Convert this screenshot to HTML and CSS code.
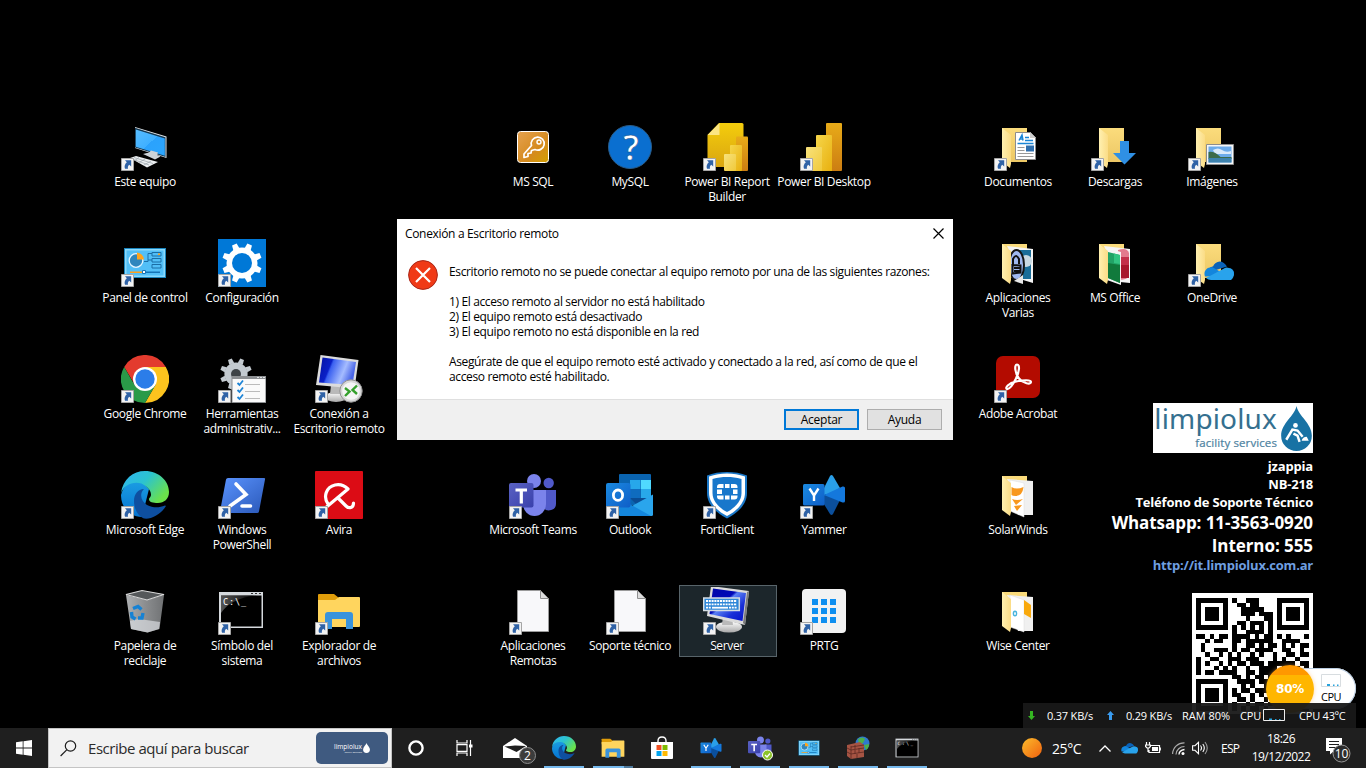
FILE: index.html
```html
<!DOCTYPE html>
<html lang="es">
<head>
<meta charset="utf-8">
<title>Escritorio</title>
<link rel="stylesheet" href="styles.css">
</head>
<body>
<svg class="defs" aria-hidden="true">
<defs>
<linearGradient id="gScr" x1="0" y1="0" x2="1" y2="1"><stop offset="0" stop-color="#58bdff"/><stop offset=".5" stop-color="#3fb0ff"/><stop offset=".5" stop-color="#2ba2fc"/><stop offset="1" stop-color="#2ba6ff"/></linearGradient>
<linearGradient id="gBlue" x1="0" y1="0" x2="1" y2=".3"><stop offset="0" stop-color="#0412a0"/><stop offset=".35" stop-color="#0a20c8"/><stop offset=".4" stop-color="#3a60f0"/><stop offset=".75" stop-color="#a5bcff"/><stop offset="1" stop-color="#4a66e8"/></linearGradient>
<linearGradient id="gBlue2" x1="0" y1="0" x2="1" y2="1"><stop offset="0" stop-color="#0008a8"/><stop offset=".4" stop-color="#0008b8"/><stop offset=".45" stop-color="#5a80f4"/><stop offset=".7" stop-color="#1a30d8"/><stop offset="1" stop-color="#0310c8"/></linearGradient>
<linearGradient id="gEdgeTop" x1="0" y1="0" x2="1" y2=".6"><stop offset="0" stop-color="#2fb4f5"/><stop offset=".5" stop-color="#2cc3cf"/><stop offset="1" stop-color="#6be24a"/></linearGradient>
<linearGradient id="gEdgeL" x1="0" y1="0" x2="0" y2="1"><stop offset="0" stop-color="#1b9de2"/><stop offset="1" stop-color="#0573d0"/></linearGradient>
<linearGradient id="gPs" x1="0" y1="0" x2="1" y2="1"><stop offset="0" stop-color="#5b94ff"/><stop offset="1" stop-color="#2a58b8"/></linearGradient>
<linearGradient id="gFold" x1="0" y1="0" x2="0" y2="1"><stop offset="0" stop-color="#fbdc7c"/><stop offset="1" stop-color="#ecc765"/></linearGradient>
<linearGradient id="gFlap" x1="0" y1="0" x2="1" y2="0"><stop offset="0" stop-color="#fff0b0"/><stop offset="1" stop-color="#fbdc86"/></linearGradient>
<linearGradient id="gKey" x1="0" y1="0" x2="1" y2="1"><stop offset="0" stop-color="#e5a250"/><stop offset=".6" stop-color="#d58a1e"/><stop offset="1" stop-color="#d3a000"/></linearGradient>
<linearGradient id="gY1" x1="0" y1="0" x2="1" y2="1"><stop offset="0" stop-color="#f8e27c"/><stop offset="1" stop-color="#f0c93a"/></linearGradient>
<linearGradient id="gY2" x1="0" y1="0" x2="1" y2="1"><stop offset="0" stop-color="#f6d64a"/><stop offset="1" stop-color="#e8b010"/></linearGradient>
<linearGradient id="gY3" x1="0" y1="0" x2="0" y2="1"><stop offset="0" stop-color="#e8ab18"/><stop offset="1" stop-color="#cc7d12"/></linearGradient>
<linearGradient id="gPage" x1="0" y1="0" x2="0" y2="1"><stop offset="0" stop-color="#f4cd0c"/><stop offset="1" stop-color="#d9a511"/></linearGradient>
<linearGradient id="gT" x1="0" y1="0" x2="1" y2="1"><stop offset="0" stop-color="#5a62c3"/><stop offset="1" stop-color="#3940ab"/></linearGradient>
<linearGradient id="gO" x1="0" y1="0" x2="1" y2="1"><stop offset="0" stop-color="#1a8ae0"/><stop offset="1" stop-color="#0f5ec8"/></linearGradient>
<linearGradient id="gBin" x1="0" y1="0" x2="1" y2="0"><stop offset="0" stop-color="#aeb0b2"/><stop offset=".5" stop-color="#8c8e90"/><stop offset="1" stop-color="#707274"/></linearGradient>
<linearGradient id="gSun" x1="0" y1="0" x2="1" y2="1"><stop offset="0" stop-color="#fbbc2c"/><stop offset="1" stop-color="#f0600e"/></linearGradient>
<linearGradient id="gSilver" x1="0" y1="0" x2="0" y2="1"><stop offset="0" stop-color="#fff"/><stop offset="1" stop-color="#a8a8a8"/></linearGradient>
<linearGradient id="gCmd" x1="0" y1="0" x2="1" y2="0"><stop offset="0" stop-color="#777"/><stop offset="1" stop-color="#000"/></linearGradient>
</defs>

<symbol id="lnk" viewBox="0 0 13 13"><path fill="#f3f3f3" stroke="#a5a5a5" d="M.5.5h12v12H.5z"/><path fill="#2f62a6" d="M4 2.200h6.200v6.200L8.300 6.700C7 7.800 6.600 9 7 10.800H4C3 8.200 4 6 5.800 4.300z"/></symbol>

<symbol id="pc" viewBox="0 0 48 48"><path fill="#e3e7ea" d="M14 4l31.500 9.500V35L14 25z"/><path fill="#15374f" d="M14 4.800l30.500 9.500v19.800L14 24.600z"/><path fill="url(#gScr)" d="M14.800 6.400l29 9v17.300l-29-8.900z"/><path fill="#cdd3d8" d="M22 31l6-1.500 2-2 7 2-1 2.500 3.500 1.500-5.500 3z"/><path fill="#eceff1" d="M9 35l6-2 22 6-11 5.500z"/><path fill="none" stroke="#9aa3aa" stroke-width=".7" d="M13 34.500l19 6M11 36l17 6M18 34.500l-4 3M24 36l-6 3.500M30 38l-7 4"/></symbol>

<symbol id="panel" viewBox="0 0 48 48"><path fill="#1b86bf" d="M3 9h42v30H3z"/><path fill="#8ad8fb" d="M4 10h40v28H4z"/><path fill="#52bff7" d="M5.500 11.500h37v25h-37z"/><circle cx="15" cy="21.500" r="6.800" fill="#2f86bd" stroke="#e4f5ff" stroke-width="1.300"/><path fill="#ffa41c" d="M16 13.500a7.500 7.500 0 0 1 7 7h-7z"/><path fill="none" stroke="#1b6ea6" d="M23 22.500h4v-8h4M27 21h4M31 13.500h9v3.500h-9zM31 19.500h9V23h-9zM31 25.500h9V29h-9z"/><path fill="#ff9f1a" d="M9 32.500h13V34H9zM37 14.500h2v1.500h-2z"/><path fill="#1573b5" d="M24 32.500h15V34H24z"/><path fill="#fff" stroke="#1573b5" d="M21.500 31.500h3v3h-3z"/></symbol>

<symbol id="gear" viewBox="0 0 48 48"><path fill="#0078d7" d="M0 0h48v48H0z"/><g fill="#fff" transform="translate(24 24)"><circle r="15.500"/><g id="teeth"><path d="M-3.300-14l.8-6h5l.8 6z" transform="rotate(22.500)"/><path d="M-3.300-14l.8-6h5l.8 6z" transform="rotate(67.500)"/><path d="M-3.300-14l.8-6h5l.8 6z" transform="rotate(112.500)"/><path d="M-3.300-14l.8-6h5l.8 6z" transform="rotate(157.500)"/><path d="M-3.300-14l.8-6h5l.8 6z" transform="rotate(202.500)"/><path d="M-3.300-14l.8-6h5l.8 6z" transform="rotate(247.500)"/><path d="M-3.300-14l.8-6h5l.8 6z" transform="rotate(292.500)"/><path d="M-3.300-14l.8-6h5l.8 6z" transform="rotate(337.500)"/></g><circle r="10" fill="#0078d7"/></g></symbol>

<symbol id="chrome" viewBox="0 0 48 48"><path fill="#e33b2e" d="M3.200 12a24 24 0 0 1 41.600 0z"/><path fill="#e33b2e" d="M3.200 12L14 30l10-18z"/><path fill="#fcc31e" d="M44.800 12A24 24 0 0 1 24 48l10.400-18L35 20 24 12z"/><path fill="#2a9a48" d="M3.200 12A24 24 0 0 0 24 48l10.400-18L24 36l-10.400-6z"/><circle cx="24" cy="24" r="12" fill="#fff"/><circle cx="24" cy="24" r="9.700" fill="#2b7de9"/></symbol>

<symbol id="tools" viewBox="0 0 48 48"><g fill="#c3cad0" transform="translate(18 19) scale(.8)"><circle r="14.500"/><use href="#teeth"/></g><circle cx="18" cy="19" r="5" fill="#3e4347"/><path fill="#8d9093" d="M13.500 21H48v27H13.500z"/><path fill="#fafafa" d="M14.500 24h32.800v23H14.500z"/><path fill="#dfe2e4" d="M39 22h2v1h-2zM42 22h2v1h-2zM45 22h2v1h-2z"/><path fill="none" stroke="#1d84d6" stroke-width="1.800" d="M19.500 28l2 2 3.500-4.500M19.500 35l2 2 3.500-4.500M19.500 42l2 2 3.500-4.500"/><path stroke="#bbb" d="M27 29.500h15M27 36.500h15M27 43.500h15"/></symbol>

<symbol id="monitor" viewBox="0 0 48 48"><ellipse cx="26" cy="41" rx="13" ry="5.500" fill="url(#gSilver)"/><path fill="#b9b9b9" d="M20 30h9l1 9H19z"/><path fill="#dcdcdc" d="M8 0l38 5-4 34L4 30z"/><path fill="#7b7b7b" d="M46 5l-4 34-2-2 4-31z"/><path fill="url(#gBlue2)" d="M10 2.500l33 4.500-3.500 28L6.500 28z"/></symbol>

<symbol id="rdp" viewBox="0 0 48 48"><ellipse cx="21" cy="42" rx="11" ry="5" fill="url(#gSilver)"/><path fill="#b9b9b9" d="M16 30h9l1 9H15z"/><path fill="#dcdcdc" d="M5.500 0L43.500 5 39.500 33.500 1 30z"/><path fill="url(#gBlue)" d="M7.500 2.500L41 7l-3.500 23L4 27.500z"/><circle cx="36" cy="36" r="11.200" fill="#d8d8d8" stroke="#909090"/><circle cx="36" cy="36" r="8.800" fill="#f5f5f5"/><path fill="none" stroke="#35a02c" stroke-width="2.400" d="M30 33l4.500 3.500L30 41M42 30.500L37.500 35l4.500 4"/></symbol>

<symbol id="edge" viewBox="0 0 48 48"><path fill="url(#gEdgeL)" d="M0 24C3 12 12 8 21 11l7 7-7 28C8 46 0 36 0 24z"/><path fill="url(#gEdgeTop)" d="M0 22C2 8 12 0 24 0c14 0 24 10 24 21 0 7-5 11-11 11-5 0-9-1-9-3.500 0-2 2-2 2-5 0-5-5-8.500-9.500-11C12 10 3 14 0 22z"/><path fill="#0e4fa0" d="M13 30c0-7 4-12 10-12-5 5-3 12 3 16 6 3 12 3 18 .5 1 0 1 .6.500 1.200C39 44 30 48.500 23 47.500 17 45 13 38 13 30z"/></symbol>

<symbol id="ps" viewBox="0 0 48 48"><path fill="url(#gPs)" d="M10 7h36q1.500 0 1 1.500l-6 32q-.3 1.500-2 1.500H3q-1.500 0-1-1.500L8 8.500Q8.400 7 10 7z"/><path fill="none" stroke="#fff" stroke-width="3.600" stroke-linecap="round" d="M18 13l10 10.500L12 35M24 35h8.500"/></symbol>

<symbol id="avira" viewBox="0 0 48 48"><rect width="48" height="48" rx="1" fill="#dc0c15"/><path fill="none" stroke="#fff" stroke-width="3.200" stroke-linecap="round" stroke-linejoin="round" d="M13 33C8 26 11 16 20 14c5-1 10 1 13 4L11.500 36M23 27l8 8c3 3 7.500 2 7.500-3"/></symbol>

<symbol id="bin" viewBox="0 0 48 48"><path fill="url(#gBin)" d="M5 8l21 5 17-5-4.500 34-12 3.500L10 42z"/><path fill="#d9dcdf" d="M9 34l9-2 21 3-1 7-11.500 3.500L10 42z" opacity=".7"/><path fill="#55585a" stroke="#dadada" stroke-width="1.200" d="M5 7.500L21 3.500l22 4L26 13z"/><path fill="none" stroke="#1682d4" stroke-width="3.400" d="M12 21.500l5-2 3.500 3M22 26l-1 5h-4M10.500 25l.5 5 3.500 2"/></symbol>

<symbol id="cmd" viewBox="0 0 48 48"><path fill="#d5d9dd" d="M1 5h44v36H1z"/><path fill="#000" d="M3 8.500h40.500v31H3z"/><path fill="url(#gCmd)" d="M3 8.500h36C22 10 10 16 3 26z" opacity=".7"/><path fill="#333" d="M33 6h2v1h-2zM37 6h2v1h-2zM41 6h2v1h-2z"/></symbol>

<symbol id="explorer" viewBox="0 0 48 48"><path fill="#e09d0a" d="M3 8q0-1 1-1h15l5 4v6H3z"/><path fill="#ffd55e" d="M3 13h17l4-3h20q1 0 1 1v28q0 1-1 1H3z"/><path fill="#3a93dc" d="M10 42V28q0-3 3-3h22q3 0 3 3v14h-7V32H17v10z"/></symbol>

<symbol id="key" viewBox="0 0 48 48"><rect x="8.500" y="8.500" width="31" height="31" rx="3" fill="url(#gKey)" stroke="#fff"/><path fill="none" stroke="#fff" stroke-width="1.700" stroke-linejoin="round" d="M22.500 22.500a6.500 6.500 0 1 1 3.500 4l-3.500 1-.5 2.500-3 .5v3l-4 1v-3.500z"/><circle cx="30" cy="19" r="2" fill="none" stroke="#fff" stroke-width="1.400"/></symbol>

<symbol id="pbirb" viewBox="0 0 48 48"><path fill="url(#gPage)" d="M16 0h23q1.500 0 1.500 1.500V44H4.500V12z"/><path fill="#fbe583" d="M16.500 0v12H4.500z"/><rect x="33" y="13.500" width="12" height="34.500" rx="1" fill="url(#gY3)"/><rect x="27" y="22" width="12" height="26" rx="1" fill="url(#gY2)"/><rect x="21" y="31" width="12" height="17" rx="1" fill="url(#gY1)"/></symbol>
<symbol id="pbi" viewBox="0 0 48 48"><rect x="26" width="16" height="48" rx="1" fill="url(#gY3)"/><path fill="url(#gY2)" d="M17 12h14q1 0 1 1v35H16V13q0-1 1-1z"/><path fill="url(#gY1)" d="M7 24h14q1 0 1 1v23H6V25q0-1 1-1z"/></symbol>

<symbol id="teams" viewBox="0 0 48 48"><circle cx="39.700" cy="12" r="5.200" fill="#5059c9"/><path fill="#5059c9" d="M34 19h13v13a7 7 0 0 1-13 4z"/><circle cx="25" cy="10" r="7" fill="#7b83eb"/><path fill="#7b83eb" d="M14 19h23v14a11.500 12 0 0 1-23 0z"/><rect y="12" width="24.500" height="24.500" rx="2" fill="url(#gT)"/><path fill="#fff" d="M6.500 17.500h11.500v3h-4.100v12h-3.200v-12H6.500z"/></symbol>

<symbol id="outlook" viewBox="0 0 48 48"><path fill="#0a64b0" d="M13 4q0-1 1-1h30q1 0 1 1v30H13z"/><path fill="#27a7ea" d="M24 9h10.500v9H24z"/><path fill="#50d9ff" d="M35 9h10v9H35z"/><path fill="#0f6cbf" d="M24 18h10.500v9H24z"/><path fill="#28a8ea" d="M35 18h10v9H35z"/><path fill="#0a4c94" d="M24 27h21l-14 7z"/><path fill="#2aa5ec" d="M47 23.500V43.500q0 1.500-1.500 1.500H24V36z"/><path fill="#1486dc" d="M13 27l32 18H14q-1 0-1-1z"/><rect y="12" width="24.500" height="24.500" rx="2" fill="url(#gO)"/><ellipse cx="12" cy="24.200" rx="4.600" ry="5.200" fill="none" stroke="#fff" stroke-width="2.800"/></symbol>

<symbol id="forti" viewBox="0 0 48 48"><path fill="#1b78c8" d="M24 1c7 0 14 1 20 3.500V22c0 11-9 20-20 25.500C13 42 4 33 4 22V4.500C10 2 17 1 24 1z"/><path fill="#fff" d="M24 2.500c6 0 12 1 18 3V22c0 9.500-8 18-18 23C14 40 6 31.500 6 22V5.500c6-2 12-3 18-3z"/><path fill="#1877cb" d="M24 6c5 0 9 .6 14.500 2v14C38.500 30 32 37 24 41 16 37 9.500 30 9.500 22V8C15 6.600 19 6 24 6z"/><path fill="#fff" d="M17 13h3.500v4H14v-1q0-3 3-3zM22 13h4.500v4H22zM28 13h3.500q3 0 3 3v1H28zM14 18.500h5V23h-5zM30 18.500h4.500V23H30zM14 24.500h6.500v4H17q-3 0-3-3zM22 24.500h4.500v4H22zM28 24.500h6.500v1q0 3-3 3H28z"/></symbol>

<symbol id="yammer" viewBox="0 0 48 48"><path fill="#2a9fe8" d="M22 21L30 5q1.500-2 3 0l7 12-15 9z"/><path fill="#0b4f9c" d="M22 30l8 13q1.500 2 3 0l7-14-15-6z"/><path fill="#1478dc" d="M24 24l18.500-8.500q2.500-.5 2.500 1.500v13q0 2-2.500 1.500z"/><rect x="3" y="13" width="21.500" height="21.500" rx="1.500" fill="url(#gO)"/><path fill="none" stroke="#fff" stroke-width="2.400" d="M9.500 17.500l4.500 7 4.500-7M14 24v6"/></symbol>

<symbol id="doc" viewBox="0 0 48 48"><path fill="#f8f8fa" stroke="#9a9a9a" d="M8.500 3.500h23l8 8v33h-31z"/><path fill="#ddd" stroke="#8f8f8f" d="M31.500 3.500v8h8z"/></symbol>

<symbol id="srv" viewBox="0 0 48 48"><use href="#monitor" width="48" height="48" y="-1"/><path fill="#2f87d8" stroke="#d5dde3" stroke-width="1.500" d="M.7 11h35.600v12.500H.7z"/><path fill="none" stroke="#fff" stroke-width="1.800" stroke-dasharray="2 .8" d="M3 14h31M3 17.300h31M3 20.700h5M26 20.700h8"/><path stroke="#fff" stroke-width="1.800" d="M9 20.700h16"/></symbol>

<symbol id="prtg" viewBox="0 0 48 48"><rect x="2" y="2" width="44" height="44" rx="4" fill="#f2f2f2"/><path fill="#0f8ff0" d="M12 12h6v6h-6zM21 12h6v6h-6zM30 12h6v6h-6zM12 21h6v6h-6zM21 21h6v6h-6zM30 21h6v6h-6zM12 30h6v6h-6zM21 30h6v6h-6zM30 30h6v6h-6z"/></symbol>

<symbol id="fback" viewBox="0 0 48 48"><path fill="url(#gFold)" d="M8 5h25v34H8z"/></symbol>
<symbol id="fflap" viewBox="0 0 48 48"><path fill="url(#gFlap)" d="M8 5l9 7v29l-1 4-8-6z"/></symbol>
<symbol id="fdoc" viewBox="0 0 48 48"><use href="#fback"/><use href="#fflap"/><path fill="#fff" stroke="#8d8d8d" d="M21.500 9.500h15l5 5v22h-20z"/><path fill="#ccc" d="M36 9v6h6z"/><path fill="none" stroke="#1b86d6" stroke-width="1.500" d="M25 17.500l3-5.500 1 5.500M26 16h3M31 14.500h4M31 17.500h8M23.500 20.500h16"/><path stroke="#999" d="M23.500 24.500h7M23.500 27.500h7M23.500 30.500h16M23.500 33.500h16"/><path fill="#2f6fae" d="M32 22.500h8v6h-8z"/></symbol>
<symbol id="fdown" viewBox="0 0 48 48"><use href="#fback"/><use href="#fflap"/><path fill="#2f90e4" d="M29 18h9v12h7L33.500 41.500 22 30h7z"/></symbol>
<symbol id="fimg" viewBox="0 0 48 48"><use href="#fback"/><use href="#fflap"/><path fill="#f6f6f6" stroke="#8d8d8d" d="M18.500 21.500h27v20h-27z"/><path fill="#6cabea" d="M20.500 23.500h23v16h-23z"/><path fill="#dbeafa" d="M25 27q5-3 9 0t9 1v3H27z"/><path fill="#3c6b4a" d="M20.500 29q6-1 12 5h11v2h-23z"/><path fill="#3d82ad" d="M20.500 35h23v4.500h-23z"/></symbol>
<symbol id="fapps" viewBox="0 0 48 48"><use href="#fback"/><path fill="#f4f4f4" d="M13 7l26 3v34l-10-3z"/><path fill="#1a6d99" d="M25 11h12v29H27z"/><circle cx="32" cy="22" r="6" fill="#c9d9e2"/><ellipse cx="22.500" cy="26" rx="7.500" ry="15" fill="#9fb8f0" stroke="#151515" stroke-width="2"/><path fill="none" stroke="#111" stroke-width="2" d="M19 26v-6q3-6 6 0v5M18.500 26l8 .5v7l-8 1zM20 29h6M20 32h6"/><path fill="#e8e8e8" d="M20 42l9 3V36z"/><use href="#fflap"/></symbol>
<symbol id="foffice" viewBox="0 0 48 48"><use href="#fback"/><path fill="#f4f4f4" d="M13 7l26 3v34l-10-1z"/><path fill="#e37a8d" d="M27 11q9-3 11 3v24q-5 4-11 2z"/><path fill="#c3304a" d="M27 18h11v8H27z"/><path fill="#a8162c" d="M27 26h11v13H27z"/><path fill="#f5f5f5" d="M16 9l14 4v33l-14-5z"/><path fill="#22a366" d="M17 13l12 3v28l-12-5z"/><path fill="#117a3c" d="M17 24l12 2v18l-12-5z"/><path fill="#33c481" d="M23 14.500l6 1.500v9l-6-1z"/><use href="#fflap"/></symbol>
<symbol id="cloud" viewBox="0 0 30 20"><path fill="#0a62b8" d="M4 12C4 8 7 6 9 6c2-5 9-8 14 0z"/><path fill="#1386dc" d="M1 16C-1 11 3 6 9 7l12 7 5-6c3 0 5 4 4 7z"/><path fill="#29a3ec" d="M2 17.500L20 8q2-1.500 5-.5c5 1 7 8 2 12H7q-3 0-5-2z"/></symbol>
<symbol id="fone" viewBox="0 0 48 48"><use href="#fback"/><use href="#fflap"/><use href="#cloud" x="16" y="21.500" width="30" height="20"/></symbol>
<symbol id="fsolar" viewBox="0 0 48 48"><use href="#fback"/><path fill="#f0f0f0" d="M13 8l26 2v34H24z"/><path fill="#fff" stroke="#ddd" stroke-width=".5" d="M16 9l14 3v34l-14-6z"/><path fill="#f8981d" d="M17.500 16q5 3 12 0-1 9-8 9-3 0-4-1zM18 28q5 2 11 0l-7 6zM20 35l8-1-5 6z"/><use href="#fflap"/></symbol>
<symbol id="fwise" viewBox="0 0 48 48"><use href="#fback"/><path fill="#f0f0f0" d="M13 8l26 2v34H24z"/><path fill="#fff" stroke="#ddd" stroke-width=".5" d="M16 8l14 5v32l-14-5z"/><path fill="#f9a90d" d="M30 13l7 5v13l-7-4z"/><ellipse cx="21" cy="26.500" rx="1.600" ry="2.300" fill="none" stroke="#48b4dc" stroke-width="1.400"/><use href="#fflap"/></symbol>
<symbol id="acro" viewBox="0 0 48 48"><rect x="2" y="1" width="44" height="42" rx="7" fill="#b30b00"/><path fill="none" stroke="#fff" stroke-width="2.200" stroke-linejoin="round" d="M23 9.500c3 0 2.500 7-1 14-3 6-6.500 11-9 10.500-2.500-1 1.500-6 9-7.500 7-1.500 15-2 15 .5 0 3-8 1.500-12-3.500s-5-14-2-14z"/></symbol>

<symbol id="drop" viewBox="0 0 30 44"><path d="M15 0c2 10 15 17 15 29a15 15 0 0 1-30 0C0 17 13 10 15 0z"/><circle cx="14" cy="19" r="2.300" fill="#fff"/><path fill="none" stroke="#fff" stroke-width="2.400" d="M5 33l6-10 5 1 5 6M12 27l4 2 2 6"/><path fill="#fff" d="M20 34q1-4 5-4l2 4z"/></symbol>

<symbol id="wall" viewBox="0 0 24 24"><circle cx="16.500" cy="7.500" r="7" fill="#2f79d0"/><path fill="#4db04a" d="M12 3q5-3 7 0l-2 4-4 2zM18 9l5-1q0 4-3 6z"/><path fill="#a65443" d="M1 9l13-3 4 3v12L5 23l-4-3z"/><path fill="none" stroke="#5d2a22" stroke-width=".8" d="M1 12l4 2 13-2M1 16l4 2 13-2M5 10v13M9 9v4M13 12v5M9 14v4M11 18v4M5 11l13-2"/></symbol>
</svg>

<main class="desktop">
<section class="icons" id="icons">
<div class="item r1 c1"><svg class="ico"><use href="#pc"/></svg><svg class="lnk"><use href="#lnk"/></svg><span class="label">Este equipo</span></div>
<div class="item r1 c5"><svg class="ico"><use href="#key"/></svg><span class="label">MS SQL</span></div>
<div class="item r1 c6"><svg class="ico" viewBox="0 0 48 48"><circle cx="24" cy="24" r="21.500" fill="#0a6fd0" stroke="#2b5c88"/><text class="q" x="25" y="37" text-anchor="middle">?</text></svg><span class="label">MySQL</span></div>
<div class="item r1 c7"><svg class="ico"><use href="#pbirb"/></svg><svg class="lnk"><use href="#lnk"/></svg><span class="label">Power BI Report<br>Builder</span></div>
<div class="item r1 c8"><svg class="ico"><use href="#pbi"/></svg><svg class="lnk"><use href="#lnk"/></svg><span class="label">Power BI Desktop</span></div>
<div class="item r1 c10"><svg class="ico"><use href="#fdoc"/></svg><svg class="lnk"><use href="#lnk"/></svg><span class="label">Documentos</span></div>
<div class="item r1 c11"><svg class="ico"><use href="#fdown"/></svg><svg class="lnk"><use href="#lnk"/></svg><span class="label">Descargas</span></div>
<div class="item r1 c12"><svg class="ico"><use href="#fimg"/></svg><svg class="lnk"><use href="#lnk"/></svg><span class="label">Imágenes</span></div>

<div class="item r2 c1"><svg class="ico"><use href="#panel"/></svg><svg class="lnk"><use href="#lnk"/></svg><span class="label">Panel de control</span></div>
<div class="item r2 c2"><svg class="ico"><use href="#gear"/></svg><svg class="lnk"><use href="#lnk"/></svg><span class="label">Configuración</span></div>
<div class="item r2 c10"><svg class="ico"><use href="#fapps"/></svg><span class="label">Aplicaciones<br>Varias</span></div>
<div class="item r2 c11"><svg class="ico"><use href="#foffice"/></svg><span class="label">MS Office</span></div>
<div class="item r2 c12"><svg class="ico"><use href="#fone"/></svg><svg class="lnk"><use href="#lnk"/></svg><span class="label">OneDrive</span></div>

<div class="item r3 c1"><svg class="ico"><use href="#chrome"/></svg><svg class="lnk"><use href="#lnk"/></svg><span class="label">Google Chrome</span></div>
<div class="item r3 c2"><svg class="ico"><use href="#tools"/></svg><svg class="lnk"><use href="#lnk"/></svg><span class="label">Herramientas<br>administrativ...</span></div>
<div class="item r3 c3"><svg class="ico"><use href="#rdp"/></svg><svg class="lnk"><use href="#lnk"/></svg><span class="label">Conexión a<br>Escritorio remoto</span></div>
<div class="item r3 c10"><svg class="ico"><use href="#acro"/></svg><svg class="lnk"><use href="#lnk"/></svg><span class="label">Adobe Acrobat</span></div>

<div class="item r4 c1"><svg class="ico"><use href="#edge"/></svg><svg class="lnk"><use href="#lnk"/></svg><span class="label">Microsoft Edge</span></div>
<div class="item r4 c2"><svg class="ico"><use href="#ps"/></svg><svg class="lnk"><use href="#lnk"/></svg><span class="label">Windows<br>PowerShell</span></div>
<div class="item r4 c3"><svg class="ico"><use href="#avira"/></svg><svg class="lnk"><use href="#lnk"/></svg><span class="label">Avira</span></div>
<div class="item r4 c5"><svg class="ico"><use href="#teams"/></svg><svg class="lnk"><use href="#lnk"/></svg><span class="label">Microsoft Teams</span></div>
<div class="item r4 c6"><svg class="ico"><use href="#outlook"/></svg><svg class="lnk"><use href="#lnk"/></svg><span class="label">Outlook</span></div>
<div class="item r4 c7"><svg class="ico"><use href="#forti"/></svg><svg class="lnk"><use href="#lnk"/></svg><span class="label">FortiClient</span></div>
<div class="item r4 c8"><svg class="ico"><use href="#yammer"/></svg><svg class="lnk"><use href="#lnk"/></svg><span class="label">Yammer</span></div>
<div class="item r4 c10"><svg class="ico"><use href="#fsolar"/></svg><span class="label">SolarWinds</span></div>

<div class="item r5 c1"><svg class="ico"><use href="#bin"/></svg><span class="label">Papelera de<br>reciclaje</span></div>
<div class="item r5 c2"><svg class="ico" viewBox="0 0 48 48"><use href="#cmd"/><text class="prompt" x="5" y="18" textLength="23">C:\_</text></svg><svg class="lnk"><use href="#lnk"/></svg><span class="label">Símbolo del<br>sistema</span></div>
<div class="item r5 c3"><svg class="ico"><use href="#explorer"/></svg><svg class="lnk"><use href="#lnk"/></svg><span class="label">Explorador de<br>archivos</span></div>
<div class="item r5 c5"><svg class="ico"><use href="#doc"/></svg><svg class="lnk"><use href="#lnk"/></svg><span class="label">Aplicaciones<br>Remotas</span></div>
<div class="item r5 c6"><svg class="ico"><use href="#doc"/></svg><svg class="lnk"><use href="#lnk"/></svg><span class="label">Soporte técnico</span></div>
<div class="item r5 c7 selected"><svg class="ico"><use href="#srv"/></svg><svg class="lnk"><use href="#lnk"/></svg><span class="label">Server</span></div>
<div class="item r5 c8"><svg class="ico"><use href="#prtg"/></svg><svg class="lnk"><use href="#lnk"/></svg><span class="label">PRTG</span></div>
<div class="item r5 c10"><svg class="ico"><use href="#fwise"/></svg><span class="label">Wise Center</span></div>
</section>

<aside class="brand">
<div class="logo"><div class="logo-text"><span class="logo-name">limpiolux</span><span class="logo-sub">facility services</span></div><svg class="logo-drop"><use href="#drop"/></svg></div>
<div class="b-sm">jzappia</div>
<div class="b-sm">NB-218</div>
<div class="b-sm">Teléfono de Soporte Técnico</div>
<div class="b-lg">Whatsapp: 11-3563-0920</div>
<div class="b-lg">Interno: 555</div>
<div class="b-link">http://it.limpiolux.com.ar</div>
<svg class="qr" id="qr" viewBox="0 0 121 121"><path fill="#fff" d="M0 0h121v121H0z"/><path id="qrBits" shape-rendering="crispEdges" transform="translate(4 5) scale(4.520)"/></svg>
</aside>

<section class="dialog">
<header class="dlg-title"><span>Conexión a Escritorio remoto</span><svg class="dlg-x" viewBox="0 0 11 11"><path fill="none" stroke="#000" stroke-width="1.200" d="M.5.500l10 10M10.500.5l-10 10"/></svg></header>
<div class="dlg-body"><svg class="dlg-err" viewBox="0 0 30 30"><circle cx="15" cy="15" r="14.400" fill="#f03a17" stroke="#a8281a"/><path stroke="#fff" stroke-width="2.200" d="M8 8l14 14M22 8L8 22"/></svg>
<div class="dlg-text">
<p>Escritorio remoto no se puede conectar al equipo remoto por una de las siguientes razones:</p>
<p>1) El acceso remoto al servidor no está habilitado<br>2) El equipo remoto está desactivado<br>3) El equipo remoto no está disponible en la red</p>
<p>Asegúrate de que el equipo remoto esté activado y conectado a la red, así como de que el<br>acceso remoto esté habilitado.</p>
</div></div>
<footer class="dlg-foot"><button class="btn primary">Aceptar</button><button class="btn">Ayuda</button></footer>
</section>

<div class="widget"><div class="ball">80%</div><div class="wcpu"><svg class="mini" viewBox="0 0 20 13"><path fill="#fff" stroke="#d8dde0" d="M.5.500h19v12H.5z"/><path fill="#27a3dd" d="M6 10h3v2H6zM12 10.500h1.500V12H12zM16 10.500h1.500V12H16z"/></svg><span>CPU</span></div></div>
<div class="meter"><svg class="arr a-dn" viewBox="0 0 7 9"><path fill="#35b522" d="M2 0h3v5h2L3.500 9 0 5h2z"/></svg><span class="m1">0.37 KB/s</span><svg class="arr" viewBox="0 0 7 9"><path fill="#3a9cf0" d="M2 9h3V4h2L3.500 0 0 4h2z"/></svg><span class="m2">0.29 KB/s</span><span class="m3">RAM 80%</span><span class="m4">CPU</span><svg class="mbox" viewBox="0 0 22 12"><path fill="#181818" stroke="#eee" d="M.5.500h21v11H.5z"/><path fill="#27a3dd" d="M6 9.500h3v1.500H6zM12 10h1.500v1H12zM16 10h1.500v1H16z"/></svg><span class="m5">CPU 43ºC</span></div>
</main>

<footer class="taskbar">
<div class="tb start"><svg width="16" height="16" viewBox="0 0 16 16"><path fill="#fff" d="M0 2.300L6.700 1.300v6.300H0zM7.500 1.200L16 0v7.600H7.500zM0 8.400h6.700v6.300L0 13.700zM7.500 8.400H16V16l-8.500-1.200z"/></svg></div>
<div class="search"><svg class="mag" viewBox="0 0 17 17"><circle cx="10.500" cy="6" r="5.200" fill="none" stroke="#1c1c1c" stroke-width="1.200"/><path stroke="#1c1c1c" stroke-width="1.200" d="M6.700 9.800L.6 16"/></svg><span class="ph">Escribe aquí para buscar</span><span class="pill"><span class="pill-t"><b>limpiolux</b><i>facility services</i></span><svg class="pill-d"><use href="#drop"/></svg></span></div>
<div class="tb w48"><svg width="16" height="16" viewBox="0 0 16 16"><circle cx="8" cy="8" r="6.600" fill="none" stroke="#fff" stroke-width="2.400"/></svg></div>
<div class="tb w48"><svg width="17" height="16" viewBox="0 0 17 16"><path fill="none" stroke="#fff" stroke-width="1.200" d="M1 0v3h10V0M1 4.700h10v6.600H1zM1 16v-3h10v3M14.500 0v16"/><path fill="#fff" d="M13 4.500h3.500v3H13z"/></svg></div>
<div class="tb mail"><svg width="34" height="28" viewBox="0 0 34 28"><path fill="#fff" d="M1 9L13 1l12 8v12H1z"/><path fill="#1f1f1f" d="M2.500 9.500L13 8.500l11 .5-9.500 6z"/><circle cx="25.500" cy="18.500" r="8" fill="#3c3c3c" stroke="#8d8d8d"/><text class="badge" x="25.500" y="23" text-anchor="middle">2</text></svg></div>
<div class="tb on"><svg width="24" height="24"><use href="#edge"/></svg></div>
<div class="tb on split"><svg width="26" height="26"><use href="#explorer"/></svg></div>
<div class="tb"><svg width="24" height="24" viewBox="0 0 24 24"><path fill="none" stroke="#fff" stroke-width="1.400" d="M8 8V5q0-4 4-4t4 4v3"/><path fill="#fff" d="M1 6h22v16q0 1-1 1H2q-1 0-1-1z"/><path fill="#f25022" d="M6.500 9h5v5h-5z"/><path fill="#7fba00" d="M12.500 9h5v5h-5z"/><path fill="#00a4ef" d="M6.500 15h5v5h-5z"/><path fill="#ffb900" d="M12.500 15h5v5h-5z"/></svg></div>
<div class="tb on"><svg width="24" height="24"><use href="#yammer"/></svg></div>
<div class="tb on"><svg width="26" height="26" viewBox="0 0 26 26"><use href="#teams" width="24" height="24" x="1"/><circle cx="20.500" cy="20" r="5" fill="#8cc229" stroke="#fff"/><path fill="none" stroke="#fff" stroke-width="1.300" d="M18 20l2 2 3-3.500"/></svg></div>
<div class="tb on"><svg width="24" height="24"><use href="#panel"/></svg></div>
<div class="tb on"><svg width="24" height="24"><use href="#wall"/></svg></div>
<div class="tb on"><svg width="25" height="25" viewBox="0 0 48 48"><use href="#cmd"/><text class="prompt" x="5" y="18" textLength="30">C:\_</text></svg></div>
<div class="tray">
<svg class="sun" viewBox="0 0 20 20"><circle cx="10" cy="10" r="10" fill="url(#gSun)"/></svg>
<span class="temp">25°C</span>
<svg class="chev" viewBox="0 0 12 7"><path fill="none" stroke="#fff" stroke-width="1.300" d="M.5 6.500L6 1l5.500 5.500"/></svg>
<svg class="tcloud"><use href="#cloud"/></svg>
<svg class="batt" viewBox="0 0 16 12"><path fill="none" stroke="#fff" stroke-width="1.200" d="M6 3.500h8.500v7H4V8M15.300 5.500v3M1.500 0v2.500M4.500 0v2.500M.6 3h4.800v1.500L4 6H2L.6 4.500zM3 6v4"/><path fill="#fff" d="M7 5h6v4H7z"/></svg>
<svg class="wifi" viewBox="0 0 13 13"><path fill="none" stroke="#aaa" stroke-width="1.200" d="M.6 12A11.500 11.500 0 0 1 12.500.8M4 12.500a8.500 8.500 0 0 1 8.500-8"/><path fill="none" stroke="#fff" stroke-width="1.300" d="M7 12.500q0-4 5.500-5"/><circle cx="11" cy="11.500" r="1.500" fill="#fff"/></svg>
<svg class="vol" viewBox="0 0 17 14"><path fill="none" stroke="#fff" stroke-width="1.100" d="M.6 4.700H3L6.500 1.300v11.400L3 9.300H.6zM8.500 4.500q2 2.500 0 5M10.800 3q3 4 0 8"/><path fill="none" stroke="#999" stroke-width="1.100" d="M13 1q4.500 6 0 12"/></svg>
<span class="lang">ESP</span>
<span class="clock"><span>18:26</span><span class="date">19/12/2022</span></span>
<svg class="note" viewBox="0 0 26 26"><path fill="#fff" d="M0 1h16v13H8l-4 3.500V14H0z"/><path stroke="#1f1f1f" stroke-width="1.200" d="M3 4.500h10M3 7.500h10M3 10.500h7"/><circle cx="15.500" cy="16.500" r="8.500" fill="#2d2d2d" stroke="#999"/><text class="badge" x="15.500" y="20.500" text-anchor="middle">10</text></svg>
</div>
</footer>
<script src="qr.js"></script>
</body>
</html>
```
FILE: styles.css
```css
* { box-sizing: border-box; }
html, body { margin: 0; height: 100%; overflow: hidden; background: #000; }
body { display: flex; flex-direction: column; font-family: "Open Sans", "Noto Sans", sans-serif; font-size: 12px; color: #fff; }
.defs { position: absolute; width: 0; height: 0; }
.desktop { flex: 1; position: relative; background: #000; overflow: hidden; }

.icons { display: grid; grid-template-columns: repeat(12, 97px); grid-template-rows: repeat(5, 116px); padding: 123px 0 0 97px; }
.item { position: relative; display: flex; flex-direction: column; align-items: center; }
.ico { width: 48px; height: 48px; flex: none; margin-right: 1px; }
.lnk { position: absolute; left: 24px; top: 35px; width: 13px; height: 13px; }
.label { margin: 3px 0 0 -1px; line-height: 15px; text-align: center; white-space: nowrap; letter-spacing: -0.36px; text-shadow: 0 1px 1px #000; }
.q { fill: #fff; font-size: 34px; font-weight: 600; stroke: #0b4a8c; stroke-width: 0.5px; }
.prompt { fill: #fff; font-family: "DejaVu Sans Mono", monospace; font-size: 8.5px; }
.badge { fill: #fff; font-size: 12px; }
.r1 { grid-row: 1; } .r2 { grid-row: 2; } .r3 { grid-row: 3; } .r4 { grid-row: 4; } .r5 { grid-row: 5; }
.c1 { grid-column: 1; } .c2 { grid-column: 2; } .c3 { grid-column: 3; } .c5 { grid-column: 5; } .c6 { grid-column: 6; } .c7 { grid-column: 7; } .c8 { grid-column: 8; } .c10 { grid-column: 10; } .c11 { grid-column: 11; } .c12 { grid-column: 12; }
.selected::before { content: ""; position: absolute; left: 0; top: -2px; width: 96px; height: 70px; background: #1c262b; border: 1px solid #58646a; z-index: 0; }
.selected > * { z-index: 1; }
.selected .ico, .selected .label { position: relative; }

.brand { position: absolute; right: 53px; top: 403px; width: 260px; display: flex; flex-direction: column; align-items: flex-end; font-weight: 700; white-space: nowrap; }
.logo { width: 160px; height: 50px; background: #fff; display: flex; justify-content: space-between; margin-bottom: 4px; font-weight: 400; }
.logo-text { width: 124px; display: flex; flex-direction: column; align-items: flex-end; color: #35708f; }
.logo-name { font-family: "Noto Sans", sans-serif; font-size: 28px; line-height: 30px; letter-spacing: 0.15px; }
.logo-sub { font-size: 11.5px; line-height: 20px; color: #4d82a0; letter-spacing: 0.1px; -webkit-text-stroke: 0.2px #4d82a0; }
.logo-drop { width: 31px; height: 45px; margin: 3px 1px 0 0; fill: #1872a4; }
.b-sm { font-size: 13px; line-height: 18px; letter-spacing: -0.18px; }
.b-lg { font-size: 17px; line-height: 23px; letter-spacing: -0.07px; }
.b-link { font-size: 13px; line-height: 17px; letter-spacing: -0.2px; color: #6f9fe0; }
.qr { width: 121px; height: 121px; margin-top: 19px; }

.dialog { position: absolute; left: 397px; top: 219px; width: 556px; height: 221px; background: #fff; color: #000; display: flex; flex-direction: column; }
.dlg-title { height: 30px; display: flex; justify-content: space-between; align-items: center; padding: 0 9px 1px 8px; letter-spacing: -0.33px; }
.dlg-x { width: 11px; height: 11px; }
.dlg-body { flex: 1; display: flex; padding: 11px 0 0 11px; }
.dlg-err { width: 30px; height: 30px; margin-right: 11px; flex: none; }
.dlg-text { line-height: 15px; letter-spacing: -0.365px; white-space: nowrap; }
.dlg-text p { margin: 4px 0 15px; }
.dlg-text p + p { margin-top: 0; }
.dlg-foot { height: 41px; background: #f0f0f0; border-top: 1px solid #dfdfdf; display: flex; justify-content: flex-end; gap: 8px; padding: 9px 11px 0 0; }
.btn { width: 75px; height: 21px; padding: 0; font: inherit; line-height: 17px; letter-spacing: -0.25px; background: #e1e1e1; border: 1px solid #adadad; color: #000; }
.btn.primary { border: 2px solid #0078d7; line-height: 15px; }

.widget { position: absolute; left: 1266px; top: 664px; width: 90px; height: 49px; display: flex; align-items: center; color: #000; }
.widget::before { content: ""; position: absolute; left: 20px; right: 0; top: 4px; height: 41px; border-radius: 0 21px 21px 0; background: #fff; box-shadow: inset 0 0 0 1px #b8cbe0; }
.ball { position: relative; width: 48px; height: 48px; border-radius: 50%; background: linear-gradient(#ff9800 10px, #ffb600 10px); color: #fff; font-weight: 700; font-family: "DejaVu Sans", sans-serif; font-size: 12px; display: flex; align-items: center; justify-content: center; box-shadow: 0 0 4px #ffb66088; letter-spacing: -0.3px; }
.wcpu { position: relative; width: 30px; margin-left: 2px; display: flex; flex-direction: column; align-items: center; font-size: 11px; line-height: 14px; letter-spacing: -0.5px; }
.mini { width: 20px; height: 13px; margin-bottom: 3px; }
.meter { position: absolute; left: 1023px; top: 703px; width: 333px; height: 25px; padding-bottom: 1px; background: rgba(24, 24, 24, 0.95); display: flex; align-items: center; font-size: 11px; letter-spacing: -0.2px; white-space: nowrap; }
.arr { width: 7px; height: 9px; flex: none; }
.a-dn { margin-left: 5px; }
.m1 { margin-left: 12px; width: 60px; }
.m2 { margin-left: 12px; width: 56px; }
.m3 { width: 58px; letter-spacing: 0; }
.m4 { width: 23px; }
.mbox { width: 22px; height: 12px; }
.m5 { margin-left: 14px; }

.taskbar { height: 40px; background: #1f1f1f; display: flex; align-items: stretch; }
.tb { width: 49px; flex: none; display: flex; align-items: center; justify-content: center; position: relative; padding-right: 1px; }
.start, .w48 { width: 48px; padding-right: 0; }
.mail { width: 52px; }
.mail svg { margin-left: 10px; margin-top: 5px; }
.on::after { content: ""; position: absolute; left: 4px; bottom: 0; width: 40px; height: 2px; background: #76b9ed; }
.split::after { background: linear-gradient(90deg, #76b9ed 31px, #4f7a9c 31px); }
.search { width: 344px; flex: none; background: #f2f2f2; border: 1px solid #c4c4c4; display: flex; align-items: center; color: #2b2b2b; padding: 0 3px 0 11px; }
.mag { width: 17px; height: 17px; }
.ph { flex: 1; margin-left: 11px; font-size: 15px; letter-spacing: -0.45px; }
.pill { width: 72px; height: 32px; border-radius: 5px; background: #3f5a80; display: flex; align-items: center; justify-content: center; color: #fff; gap: 1px; }
.pill-t { display: flex; flex-direction: column; align-items: flex-end; line-height: 7px; }
.pill-t b { font-size: 6.5px; font-weight: 400; }
.pill-t i { font-size: 2.5px; line-height: 4px; font-style: normal; }
.pill-d { width: 7px; height: 10px; fill: #fff; }
.tray { margin-left: auto; display: flex; align-items: center; width: 344px; }
.sun { width: 20px; height: 20px; }
.temp { margin-left: 10px; width: 47px; font-size: 14px; letter-spacing: -0.4px; }
.chev { width: 12px; height: 7px; }
.tcloud { width: 17px; height: 12px; margin-left: 10px; }
.batt { width: 16px; height: 12px; margin-left: 7px; }
.wifi { width: 13px; height: 13px; margin-left: 11px; }
.vol { width: 17px; height: 14px; margin-left: 7px; }
.lang { margin-left: 12px; width: 22px; letter-spacing: -0.7px; }
.clock { width: 66px; margin-left: 5px; display: flex; flex-direction: column; align-items: center; line-height: 18px; letter-spacing: -0.5px; }
.note { width: 26px; height: 26px; margin-left: 12px; margin-top: 4px; }
```
FILE: qr.js
```js
const rows = [
  "1111111010011100001111111",
  "1000001001101100001000001",
  "1011101000111110001011101",
  "1011101000111011101011101",
  "1011101000010001101011101",
  "1000001001101110101000001",
  "1111111010101010101111111",
  "0000000010011110100000000",
  "1101011011110101101010001",
  "0010110011011111100111100",
  "0100000010011010110101011",
  "0100111010110111100110010",
  "0010010101001010010011011",
  "1001100111011100010100100",
  "1010010101101110111111011",
  "1000101010010011110110101",
  "1011011110011011111110010",
  "0000000011010110101010110",
  "1111111001111011101010101",
  "1000001000101001110111010",
  "1011101010110111111110110",
  "1011101011001010110100101",
  "1011101001101001010011010",
  "1000001010010110110101101",
  "1111111010101101001101011"
];
let d = "";
rows.forEach((row, y) => {
  [...row].forEach((bit, x) => {
    if (bit === "1") d += `M${x} ${y}h1v1h-1z`;
  });
});
document.getElementById("qrBits").setAttribute("d", d);
```
